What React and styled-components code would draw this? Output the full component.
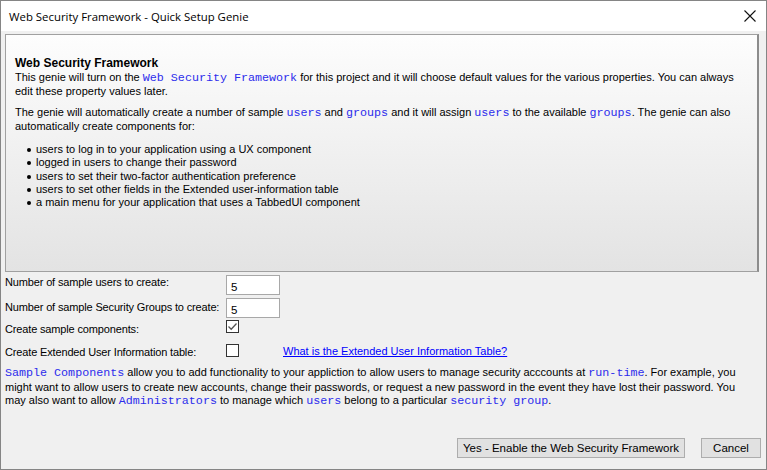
import React from "react";
import styled, { createGlobalStyle } from "styled-components";

const Global = createGlobalStyle`
  html, body { margin: 0; padding: 0; background: #f0f0f0; }
  * { box-sizing: border-box; }
`;

const Window = styled.div`
  width: 767px;
  height: 470px;
  border: 1px solid #858585;
  display: flex;
  flex-direction: column;
  background: #f0f0f0;
  font-family: "Liberation Sans", Arial, sans-serif;
  font-size: 11px;
  color: #000;
  overflow: hidden;
`;

const TitleBar = styled.div`
  height: 30px;
  flex: none;
  background: #fff;
  display: flex;
  align-items: center;
  justify-content: space-between;
  padding: 0 10px 0 8px;
`;

const Title = styled.div`
  font-family: "Open Sans", "Noto Sans", sans-serif;
  font-size: 11.4px;
  color: #000;
`;

const Body = styled.div`
  flex: 1;
  display: flex;
  flex-direction: column;
  padding: 3px 5px 10px 4px;
`;

const Panel = styled.div`
  height: 238px;
  flex: none;
  margin-right: 2px;
  border: 1px solid #a0a0a0;
  border-right: 2px solid #8c8c8c;
  background: linear-gradient(#fdfdfd, #e3e3e3);
  padding: 21px 10px 0 9px;
  line-height: 13.3px;
`;

const Heading = styled.div`
  font-weight: bold;
  font-size: 12px;
  line-height: 15px;
`;

const Para = styled.p`
  margin: 0 0 ${(p) => p.$mb || 0}px 0;
`;

const Code = styled.span`
  font-family: "Liberation Mono", "Courier New", monospace;
  font-size: 11.7px;
  color: #2c2cec;
`;

const List = styled.ul`
  margin: 0;
  padding-left: 21px;
  list-style: none;
`;

const Item = styled.li`
  position: relative;
  &::before {
    content: "";
    position: absolute;
    left: -9px;
    top: 5px;
    width: 4px;
    height: 4px;
    border-radius: 50%;
    background: #000;
  }
`;

const Form = styled.div`
  display: grid;
  grid-template-columns: 221px 57px auto;
  margin-top: 1px;
`;

const Label = styled.div`
  height: ${(p) => p.$h}px;
  padding-top: ${(p) => p.$pt}px;
  white-space: nowrap;
  letter-spacing: -0.15px;
`;

const Cell = styled.div`
  height: ${(p) => p.$h}px;
  padding-top: ${(p) => p.$pt}px;
  display: flex;
  align-items: flex-start;
`;

const TextBox = styled.input`
  width: 54px;
  height: 20px;
  border: 1px solid #a8a8a8;
  background: #fff;
  font-family: "Liberation Sans", Arial, sans-serif;
  font-size: 11.5px;
  padding: 3px 4px 0 4px;
  color: #000;
  outline: none;
  margin: 0;
`;

const Check = styled.div`
  width: 13px;
  height: 13px;
  border: 1px solid #333;
  background: #fff;
  display: flex;
  align-items: center;
  justify-content: center;
`;

const Link = styled.a`
  color: #0000ff;
  text-decoration: underline;
  white-space: nowrap;
  margin-top: 1px;
`;

const Note = styled.p`
  margin: 2px 10px 0 0;
  line-height: 13.5px;
`;

const Buttons = styled.div`
  margin-top: auto;
  display: flex;
  justify-content: flex-end;
  gap: 16px;
  padding-bottom: 1px;
`;

const Button = styled.button`
  width: ${(p) => p.$w}px;
  height: 20px;
  background: #e1e1e1;
  border: 1px solid #adadad;
  font-family: "Liberation Sans", Arial, sans-serif;
  font-size: 11.5px;
  color: #000;
  padding: 0;
`;

const Close = () => (
  <svg width="12" height="12" viewBox="0 0 12 12">
    <path d="M0.5 0.5 L11.5 11.5 M11.5 0.5 L0.5 11.5" stroke="#111" strokeWidth="1.1" fill="none" />
  </svg>
);

export default function App() {
  return (
    <>
      <Global />
      <Window>
        <TitleBar>
          <Title>Web Security Framework - Quick Setup Genie</Title>
          <Close />
        </TitleBar>
        <Body>
          <Panel>
            <Heading>Web Security Framework</Heading>
            <Para $mb={7}>
              This genie will turn on the <Code>Web Security Framework</Code> for this project and it will choose default values for the various properties. You can always edit these property values later.
            </Para>
            <Para $mb={10}>
              The genie will automatically create a number of sample <Code>users</Code> and <Code>groups</Code> and it will assign <Code>users</Code> to the available <Code>groups</Code>. The genie can also automatically create components for:
            </Para>
            <List>
              <Item>users to log in to your application using a UX component</Item>
              <Item>logged in users to change their password</Item>
              <Item>users to set their two-factor authentication preference</Item>
              <Item>users to set other fields in the Extended user-information table</Item>
              <Item>a main menu for your application that uses a TabbedUI component</Item>
            </List>
          </Panel>
          <Form>
            <Label $h={23} $pt={3}>Number of sample users to create:</Label>
            <Cell $h={23} $pt={2}><TextBox defaultValue="5" /></Cell>
            <div />
            <Label $h={23} $pt={5}>Number of sample Security Groups to create:</Label>
            <Cell $h={23} $pt={2}><TextBox defaultValue="5" /></Cell>
            <div />
            <Label $h={23} $pt={4}>Create sample components:</Label>
            <Cell $h={23} $pt={1}>
              <Check>
                <svg width="11" height="11" viewBox="0 0 11 11">
                  <path d="M1.5 5.5 L4.2 8.2 L9.5 2.5" stroke="#555" strokeWidth="1.3" fill="none" />
                </svg>
              </Check>
            </Cell>
            <div />
            <Label $h={22} $pt={4}>Create Extended User Information table:</Label>
            <Cell $h={22} $pt={2}><Check /></Cell>
            <Cell $h={22} $pt={2}><Link href="#">What is the Extended User Information Table?</Link></Cell>
          </Form>
          <Note>
            <Code>Sample Components</Code> allow you to add functionality to your appliction to allow users to manage security acccounts at <Code>run-time</Code>. For example, you might want to allow users to create new accounts, change their passwords, or request a new password in the event they have lost their password. You may also want to allow <Code>Administrators</Code> to manage which <Code>users</Code> belong to a particular <Code>security group</Code>.
          </Note>
          <Buttons>
            <Button $w={228}>Yes - Enable the Web Security Framework</Button>
            <Button $w={60}>Cancel</Button>
          </Buttons>
        </Body>
      </Window>
    </>
  );
}
